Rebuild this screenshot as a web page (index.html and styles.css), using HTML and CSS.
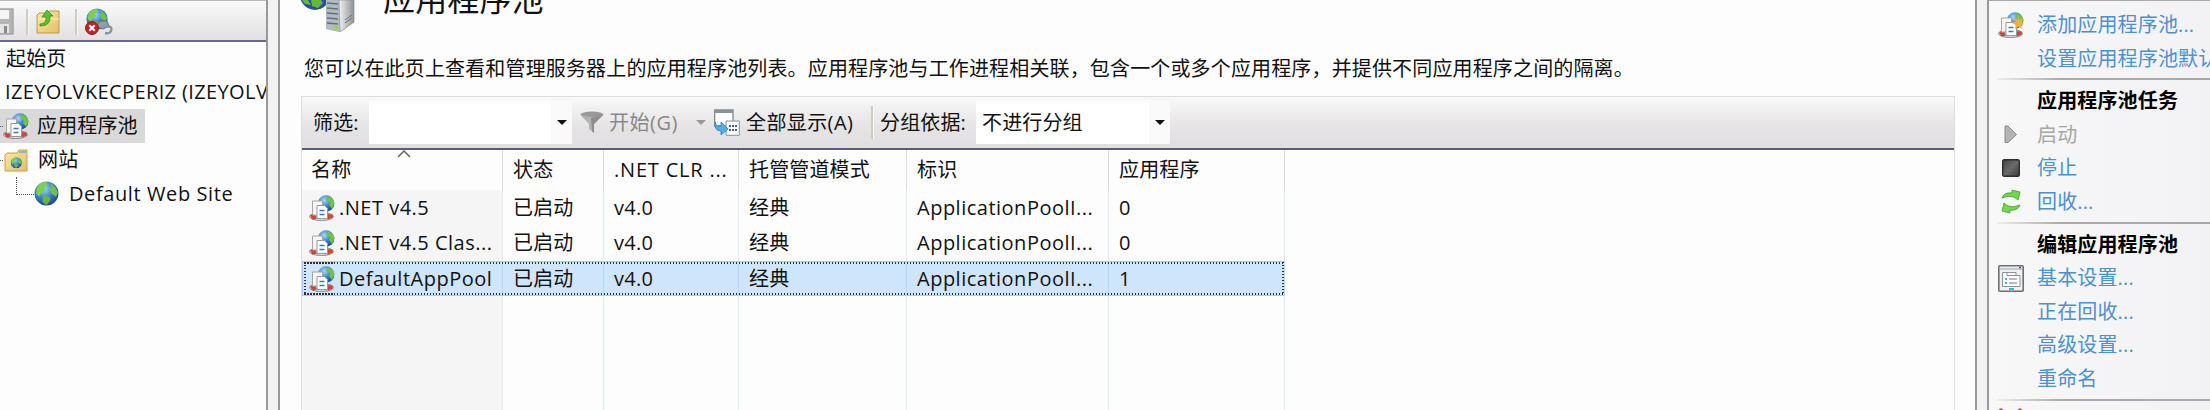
FILE: index.html
```html
<!DOCTYPE html>
<html lang="zh-CN">
<head>
<meta charset="utf-8">
<title>应用程序池</title>
<link rel="stylesheet" href="styles.css">
</head>
<body>
<svg class="defs" width="0" height="0" aria-hidden="true">
  <defs>
    <linearGradient id="metal" x1="0" x2="1"><stop offset="0" stop-color="#f2f2f2"/><stop offset="1" stop-color="#8b9196"/></linearGradient>
    <linearGradient id="folder" x1="0" y1="0" x2="1" y2="1"><stop offset="0" stop-color="#fbe9ab"/><stop offset="1" stop-color="#e3bf67"/></linearGradient>
    <radialGradient id="sea" cx=".4" cy=".3" r=".75"><stop offset="0" stop-color="#a9d8f5"/><stop offset=".5" stop-color="#3e82cc"/><stop offset="1" stop-color="#1d3f8c"/></radialGradient>
    <linearGradient id="dark" x1="0" y1="0" x2="1" y2="1"><stop offset="0" stop-color="#444"/><stop offset=".5" stop-color="#6a6a6a"/><stop offset="1" stop-color="#3a3a3a"/></linearGradient>
    <symbol id="globe" viewBox="0 0 24 24">
      <circle cx="12" cy="12" r="11.5" fill="url(#sea)"/>
      <path d="M3 6Q6 1 12 1L13 4L10 6L11 9L7 11L5 15L2 12Z" fill="#7fd04c"/>
      <path d="M15 2Q21 5 23 11L21 15L17 12L15 8L17 6Z" fill="#6cc544"/>
      <path d="M9 14L15 15L16 18L12 23L8 20Z" fill="#62b93a"/>
    </symbol>
    <symbol id="pool" viewBox="0 0 26 26">
      <circle cx="17" cy="8.500" r="8.300" fill="url(#sea)"/>
      <path d="M19 1Q25 4 25.500 8L23 14L20 10L21 7L17 5Z" fill="#6cc544"/>
      <ellipse cx="12.500" cy="21.500" rx="12" ry="4" fill="#dedede" stroke="#8a8a8a" stroke-width="1"/>
      <path d="M1 20.500L6 19L8 23.500L3.500 24.500Z M18 19L23.500 19.500L24 22.500L18.500 24.500Z" fill="#cf4536"/>
      <path d="M3.500 6H13.500V20H3.500Z" fill="#f7f5f0" stroke="#a5a5a5"/>
      <path d="M8 10.500H15.500L18.500 13.500V23.500H8Z" fill="#fff" stroke="#999"/>
      <path d="M10.500 15.500H15.500M10.500 19.500H15.500" stroke="#3977c4" stroke-width="1.700"/>
    </symbol>
  </defs>
</svg>
<div class="app">
  <aside class="nav">
    <div class="nav-tools">
      <svg class="ic-save" width="14" height="28" viewBox="0 0 14 28"><path d="M-8 1H13V26H-8Z" fill="#b5b5b5" stroke="#a5a5a5" stroke-width="1.500"/><path d="M-4 2H9V11H-4Z" fill="#f5f5f5"/><path d="M-4 16H9V25H-4Z" fill="#e4e4e4"/><path d="M4 18H7V25H4Z" fill="#8b8b8b"/></svg>
      <i class="vsep"></i>
      <svg class="ic-up" width="25" height="25" viewBox="0 0 25 25"><path d="M1 6L3 4H11L13 2H23V24H1Z" fill="url(#folder)" stroke="#c19a43"/><path d="M2 10H23" stroke="#fff2c4"/><path d="M4 15Q11 15 10 8H6L11 1L17 7H14Q15 17 4 17Z" fill="#5ac22f" stroke="#369419" stroke-width=".8"/></svg>
      <i class="vsep"></i>
      <svg class="ic-conn" width="28" height="28" viewBox="0 0 28 28"><use href="#globe" x="1" y="0" width="22" height="22"/><path d="M11 19L15 13H22L24 18L18 21Z" fill="#8ba0ae" stroke="#5e7280"/><path d="M20 19Q28 17 26 23Q25 26 20 25" fill="none" stroke="#8096a3" stroke-width="2.300"/><circle cx="7" cy="20" r="6.500" fill="#c4202a" stroke="#8d2025"/><path d="M4.300 17.300L9.700 22.700M9.700 17.300L4.300 22.700" stroke="#fff" stroke-width="2"/></svg>
    </div>
    <div class="tree">
      <div class="node start">起始页</div>
      <div class="node server"><span>IZEYOLVKECPERIZ (IZEYOLV</span></div>
      <div class="node pools"><i class="stub"></i><svg width="26" height="26"><use href="#pool"/></svg><span>应用程序池</span></div>
      <div class="node sites"><i class="stub"></i><svg width="24" height="23" viewBox="0 0 24 23"><path d="M1 6L3 4H13L15 1H23V22H1Z" fill="url(#folder)" stroke="#c5a04e"/><path d="M15 3H22" stroke="#6fa8d8" stroke-width="1.500"/><use href="#globe" x="6.500" y="8" width="11.500" height="11.500"/></svg><span>网站</span></div>
      <div class="node site"><i class="elbow"></i><svg width="25" height="25"><use href="#globe"/></svg><span>Default Web Site</span></div>
    </div>
  </aside>
  <div class="split"></div>
  <main class="main">
    <header class="title">
      <svg width="54" height="34" viewBox="0 0 54 34"><circle cx="14" cy="-5" r="15" fill="#2c4fa5"/><path d="M1 0H7L10 5L4 4Z M10 0H20L22 3L17 8L11 6Z" fill="#62b93a"/><path d="M25 0H53V22L39 32L25 29Z" fill="url(#metal)"/><path d="M25 0H38V32L25 29Z" fill="#b4bbc0"/><path d="M26 3L37 4M26 8L37 9M26 13L37 14M26 18L37 19M26 23L37 24" stroke="#63717a" stroke-width="1.500"/><path d="M38 0H53V22L39 32Z" fill="url(#metal)" stroke="#8a8f92" stroke-width=".7"/><path d="M44 23L51 18M44 20L51 15" stroke="#777"/><circle cx="35" cy="28" r="2" fill="#8ee02a"/></svg>
      <h1>应用程序池</h1>
    </header>
    <p class="desc">您可以在此页上查看和管理服务器上的应用程序池列表。应用程序池与工作进程相关联&#xFF0C;包含一个或多个应用程序&#xFF0C;并提供不同应用程序之间的隔离。</p>
    <section class="panel">
      <div class="filter">
        <span class="lbl-filter">筛选:</span>
        <span class="combo c1"><i class="drop"><b class="arrow"></b></i></span>
        <svg class="ic-funnel" width="24" height="23" viewBox="0 0 24 23"><ellipse cx="12" cy="3.500" rx="11.500" ry="3" fill="#999"/><path d="M.5 4L9 13V18L14 22V13L23.500 4Q12 8 .5 4Z" fill="#b3b3b3"/><path d="M11 7L12 20L14 22V13L23 4Z" fill="#8e8e8e"/></svg>
        <span class="go">开始(G)</span>
        <b class="arrow dim"></b>
        <svg class="ic-all" width="26" height="27" viewBox="0 0 26 27"><path d="M.7 1H19V17H.7Z" fill="#fff" stroke="#808890" stroke-width="1.300"/><path d="M1 1H19V4H1Z" fill="#8a929a"/><path d="M12 12H25.300V26.300H12Z" fill="#f7f9fc" stroke="#8a929a"/><path d="M15 17H23M15 21H23" stroke="#4460a8" stroke-width="2" stroke-dasharray="2 1"/><path d="M1 13Q2 18 7 17V13L14 20L7 26V22Q0 22 1 13Z" fill="#53aee3" stroke="#2c7cb8" stroke-width=".8"/></svg>
        <span class="showall">全部显示(A)</span>
        <i class="vsep"></i>
        <span class="lbl-group">分组依据:</span>
        <span class="combo c2">不进行分组<i class="drop"><b class="arrow"></b></i></span>
      </div>
      <div class="grid">
        <div class="row head">
          <div class="cell">名称<svg class="sort" width="14" height="8" viewBox="0 0 14 8"><path d="M1 7L7 1L13 7" fill="none" stroke="#666" stroke-width="1.500"/></svg></div><div class="cell">状态</div><div class="cell"><span class="clr">.NET CLR ...</span></div><div class="cell">托管管道模式</div><div class="cell">标识</div><div class="cell">应用程序</div>
        </div>
        <div class="row">
          <div class="cell"><svg width="26" height="26"><use href="#pool"/></svg><span class="name">.NET v4.5</span></div><div class="cell">已启动</div><div class="cell"><span class="ver">v4.0</span></div><div class="cell">经典</div><div class="cell"><span class="ident">ApplicationPoolI...</span></div><div class="cell">0</div>
        </div>
        <div class="row">
          <div class="cell"><svg width="26" height="26"><use href="#pool"/></svg><span class="name">.NET v4.5 Clas...</span></div><div class="cell">已启动</div><div class="cell"><span class="ver">v4.0</span></div><div class="cell">经典</div><div class="cell"><span class="ident">ApplicationPoolI...</span></div><div class="cell">0</div>
        </div>
        <div class="row selected">
          <div class="cell"><svg width="26" height="26"><use href="#pool"/></svg><span class="name">DefaultAppPool</span></div><div class="cell">已启动</div><div class="cell"><span class="ver">v4.0</span></div><div class="cell">经典</div><div class="cell"><span class="ident">ApplicationPoolI...</span></div><div class="cell">1</div>
        </div>
        <div class="row rest"><div class="cell"></div><div class="cell"></div><div class="cell"></div><div class="cell"></div><div class="cell"></div><div class="cell"></div></div>
      </div>
    </section>
  </main>
  <div class="split"></div>
  <aside class="actions">
    <div class="act"><i class="slot"><svg width="26" height="27" viewBox="0 0 26 27"><use href="#pool" width="26" height="26"/><path d="M20 4L21.500 8L25 6L23.500 10L26 12L23 13L24 17L20.500 14.500L17 17L17.500 13L14 11L17.500 9.500L16 6L19.500 8Z" fill="#f7b23c"/></svg></i>添加应用程序池...</div>
    <div class="act">设置应用程序池默认...</div>
    <hr>
    <div class="act heading">应用程序池任务</div>
    <div class="act disabled"><i class="slot"><svg width="14" height="19" viewBox="0 0 14 19"><path d="M1 1H4L12.500 9.500L4 17.500H1Z" fill="#b4b4b4" stroke="#888"/></svg></i>启动</div>
    <div class="act"><i class="slot"><svg width="18" height="18" viewBox="0 0 18 18"><rect x=".7" y=".7" width="16.600" height="16.600" rx="1.500" fill="url(#dark)" stroke="#2c2c2c" stroke-width="1.400"/></svg></i>停止</div>
    <div class="act"><i class="slot"><svg width="20" height="25" viewBox="0 0 20 25"><path id="rec" d="M1 9Q3 3 11 4V1L19 3L17 11L13 8Q7 6 1 9Z" fill="#70d94a" stroke="#3f9d2c" stroke-width=".8"/><use href="#rec" transform="rotate(180 10 12.500)"/></svg></i>回收...</div>
    <hr>
    <div class="act heading">编辑应用程序池</div>
    <div class="act"><i class="slot"><svg width="26" height="27" viewBox="0 0 26 27"><rect x=".8" y=".8" width="24.400" height="25.400" rx="1" fill="#eef0f2" stroke="#6b7076" stroke-width="1.600"/><path d="M2 4H24" stroke="#b9bdc4" stroke-width="1.500"/><path d="M4.500 7.500H18V10.500H22V21.500H4.500Z" fill="#fff" stroke="#8c9298"/><path d="M9 7V10.500H18" fill="none" stroke="#8c9298"/><path d="M11 14H19M11 18H19" stroke="#777" stroke-width="1.200"/><path d="M7 14H9M7 18H9M11 24H16" stroke="#3bb2dc" stroke-width="2"/><path d="M21 2.500H23" stroke="#456" stroke-width="1.500"/></svg></i>基本设置...</div>
    <div class="act">正在回收...</div>
    <div class="act">高级设置...</div>
    <div class="act">重命名</div>
    <hr>
    <div class="act"><i class="slot low"><svg width="25" height="24" viewBox="0 0 25 24"><path d="M3 3L22 22M22 3L3 22" stroke="#c94f4a" stroke-width="5" stroke-linecap="round"/></svg></i></div>
  </aside>
</div>
</body>
</html>
```
FILE: styles.css
```css
* { box-sizing: border-box; }
html, body { margin: 0; height: 410px; overflow: hidden; }
body { background: #fdfdfd; color: #111; font: 20px/34px "Open Sans", "Noto Sans CJK SC", sans-serif; letter-spacing: 0.15px; white-space: nowrap; }
svg { display: block; flex: none; overflow: hidden; }
.defs { position: absolute; }
i { font-style: normal; }
.app { display: grid; grid-template-columns: 266px 14px 1695px 14px 221px; height: 410px; }

.split { background: #f2f2f2; border-left: 2px solid #999; border-right: 2px solid #999; }
.vsep { width: 3px; background: #cfcdbd; border-right: 1px solid #f7f7f4; }

.nav { overflow: hidden; }
.nav-tools { display: flex; align-items: flex-start; height: 42px; padding-top: 7px; border-top: 1px solid #bbb; border-bottom: 2px solid #66668a; background: linear-gradient(#fafafa, #e2e0e2); }
.nav-tools .vsep { height: 26px; margin-top: 1px; }
.ic-save { margin-right: 12px; }
.ic-up { margin: 1px 14px 0 7px; }
.ic-conn { margin-left: 7px; }
.tree { display: flex; flex-direction: column; }
.node { display: flex; align-items: center; height: 34px; }
.start { height: 33px; padding-left: 6px; }
.server { height: 34px; padding-left: 5px; letter-spacing: 0.38px; }
.pools { width: 145px; background: #d9d9d9; height: 34px; }
.pools svg { margin-right: 8px; }
.stub { width: 3px; border-top: 1px dotted #555; }
.sites svg { margin: 0 10px 0 1px; }
.site { height: 33px; padding-left: 16px; letter-spacing: 0.6px; }
.elbow { width: 18px; height: 18px; margin-top: -16px; border-left: 1px dotted #555; border-bottom: 1px dotted #555; }
.site svg { margin-right: 10px; }

.main { padding-left: 21px; }
.title { display: flex; height: 34px; }
.title h1 { margin: -26px 0 0 28px; font: 400 32px/46px "Noto Sans CJK SC", sans-serif; }
.desc { margin: 17px 0 11px 3px; height: 34px; font-family: "Noto Sans CJK SC", sans-serif; }
.panel { width: 1654px; height: 314px; border: 1px solid #ddd; border-bottom: 0; }
.filter { display: flex; align-items: center; height: 53px; border-bottom: 2px solid #5a5a80; background: linear-gradient(#f9f9f9, #e5e3e4 60%, #e1dfe1); }
.lbl-filter { width: 67px; padding-left: 11px; }
.combo { display: flex; justify-content: flex-end; height: 43px; align-items: center; background: #fff; }
.c1 { width: 203px; }
.c2 { width: 194px; justify-content: space-between; padding-left: 6px; }
.drop { display: flex; align-items: center; justify-content: center; width: 21px; height: 43px; background: #fafafa; }
.arrow { border: 5px solid transparent; border-top-color: #111; border-bottom: 0; }
.dim { border-top-color: #999; margin-right: 8px; }
.ic-funnel { margin: 0 5px 0 8px; }
.go { width: 87px; color: #888; letter-spacing: 0.5px; }
.ic-all { margin-right: 6px; }
.showall { width: 125px; letter-spacing: 0.4px; }
.filter .vsep { height: 33px; margin-right: 6px; }
.lbl-group { width: 96px; }

.row { display: grid; grid-template-columns: 201px 101px 135px 168px 202px 176px; width: 983px; height: 35.5px; }
.cell { display: flex; align-items: center; padding-left: 10px; border-right: 1px solid #dfeaf6; }
.cell:first-child { padding-left: 7px; background: #f5f5f5; }
.cell svg { margin-right: 4px; }
.name { letter-spacing: 0.5px; }
.ver { letter-spacing: 0.3px; }
.ident { letter-spacing: 0.5px; }
.clr { letter-spacing: 0.8px; }
.head { height: 40px; }
.head .cell { border-right-color: #ddd; }
.head .cell:first-child { position: relative; padding-left: 9px; background: none; }
.head .sort { position: absolute; left: 95px; top: 0; margin: 0; }
.selected { position: relative; height: 35px; background: #cfe5fc; box-shadow: inset 0 0 0 1px #a9cdf2; }
.selected::after {
  content: ""; position: absolute; inset: 1px 1px 1px 2px;
  background:
    repeating-linear-gradient(90deg, #2a3038 0 1.5px, transparent 1.5px 3px) top / 100% 2px no-repeat,
    repeating-linear-gradient(90deg, #2a3038 0 1.5px, transparent 1.5px 3px) bottom / 100% 2px no-repeat,
    repeating-linear-gradient(#2a3038 0 1.5px, transparent 1.5px 3px) left / 2px 100% no-repeat,
    repeating-linear-gradient(#2a3038 0 1.5px, transparent 1.5px 3px) right / 2px 100% no-repeat;
}
.selected .cell { border-right-color: #b5d7f5; }
.selected .cell:first-child { background: none; }
.rest { height: 120px; }

.actions { padding-top: 7px; overflow: hidden; border-top: 1px solid #aaa; background: linear-gradient(90deg, #f8f8f9, #f2f2f4); }
.act { position: relative; height: 33.600px; padding-left: 48px; color: #4c91cf; }
.slot { position: absolute; left: 8px; top: 0; width: 27px; height: 34px; display: flex; align-items: center; justify-content: center; }
.low { top: 3px; height: 24px; }
.heading { color: #000; font-weight: 700; }
.disabled { color: #a6a6a6; }
.actions hr { height: 2px; margin: 3px 0 4px 8px; border: 0; background: linear-gradient(90deg, #eee, #aaa 30%); }
```
